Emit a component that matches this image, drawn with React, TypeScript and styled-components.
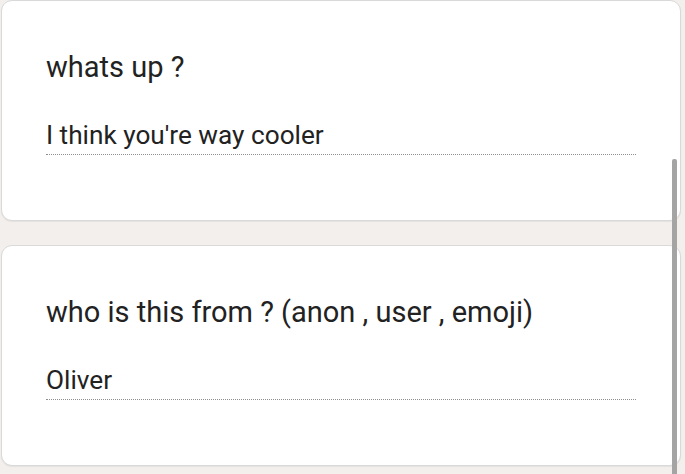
import React from "react";
import styled, { createGlobalStyle } from "styled-components";

const questions = [
    { title: "whats up ?", answer: "I think you're way cooler" },
    { title: "who is this from ? (anon , user , emoji)", answer: "Oliver" },
];

export default function App() {
    return (
        <>
            <GlobalStyle />
            <Page>
                {questions.map((q) => (
                    <Card key={q.title}>
                        <Title>{q.title}</Title>
                        <Answer>{q.answer}</Answer>
                    </Card>
                ))}
            </Page>
            <ScrollThumb />
        </>
    );
}

const GlobalStyle = createGlobalStyle`
    html, body {
        margin: 0;
        padding: 0;
        background: #f2efed;
        overflow: hidden;
    }
    body {
        font-family: Roboto, "Liberation Sans", sans-serif;
        color: #222222;
    }
`;

const Page = styled.div`
    display: flex;
    flex-direction: column;
    gap: 24px;
    padding: 0 4px 0 1px;
    min-height: 474px;
    box-sizing: border-box;
`;

const Card = styled.div`
    display: flex;
    flex-direction: column;
    box-sizing: border-box;
    height: 221px;
    padding: 48px 44px 0 44px;
    background: #ffffff;
    border: 1px solid #d9d9d9;
    border-radius: 11px;
    box-shadow: 0 1px 1px rgba(0, 0, 0, 0.06);
`;

const Title = styled.div`
    font-size: 29px;
    line-height: 36px;
`;

const Answer = styled.div`
    margin-top: 34px;
    padding-bottom: 3px;
    font-size: 26.2px;
    line-height: 32px;
    border-bottom: 1px dotted #8e8e8e;
`;

const ScrollThumb = styled.div`
    position: fixed;
    left: 672px;
    top: 159px;
    width: 5px;
    height: 320px;
    background: #a4a4a4;
    border-radius: 2px 2px 0 0;
`;
